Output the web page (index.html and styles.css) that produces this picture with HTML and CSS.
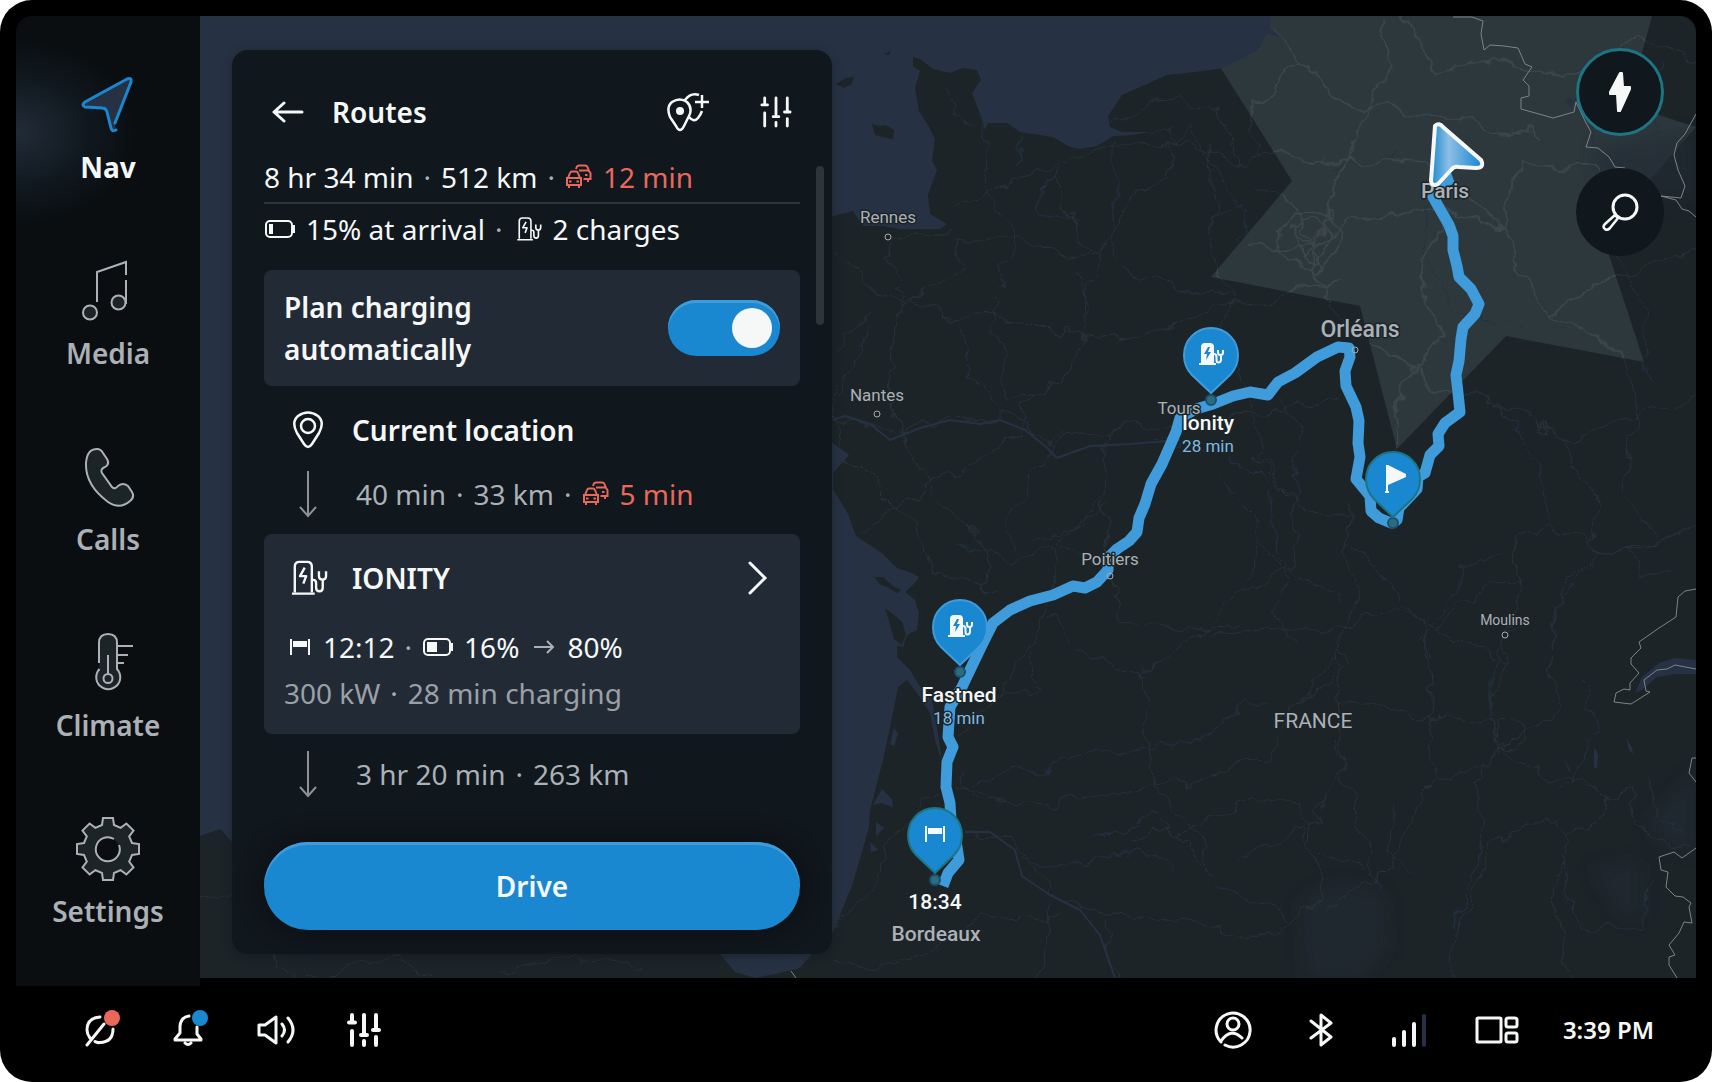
FILE: index.html
```html
<!DOCTYPE html>
<html lang="en">
<head>
<meta charset="utf-8">
<title>Navigation – Routes</title>
<meta name="viewport" content="width=device-width, initial-scale=1">
<link rel="stylesheet" href="styles.css">
</head>
<body>
<svg class="defs" aria-hidden="true">
  <symbol id="traffic" viewBox="0 0 28 26">
    <path d="M2 14h14v7H2zM3 14l2-5q.5-1.500 2-1.500h4q1.500 0 2 1.500l2 5M4 21v3M14 21v3M4 17.500h2.500M11.500 17.500H14M11 5l1-2.500Q12.500 1.500 14 1.500h6q2 0 2.500 1.500L24 7l1.500 2v6h-7M23 15v3M20 11h2.500M14 6.500h9" fill="none" stroke="currentColor" stroke-width="2"/>
  </symbol>
  <symbol id="pump" viewBox="0 0 40 38">
    <path d="M5 34V7q0-5 5-5h8q5 0 5 5v27M2 35.500h24M15.500 8l-5 9h6.500l-3 8M23 21h1.500q3 0 3 3.500V29q0 4 3.500 4t3.500-4v-8M30.500 12v4.500q0 4 3.750 4t3.750-4V12" fill="none" stroke="currentColor" stroke-width="2.500" stroke-linejoin="round"/>
  </symbol>
  <symbol id="pump-solid" viewBox="0 0 28 24">
    <path d="M3 21V5q0-4 4-4h5q4 0 4 4v16h2v2H1v-2z" fill="#f6f8f8"/>
    <path d="M10 5l-4 7h3l-1 6 5-8h-3l2-5z" fill="#1a88d0"/>
    <path d="M16 12q2.500 0 2.500 3v3q0 2.500 2 2.500t2.500-2.500v-5M20 8v2.500q0 2.500 2.500 2.500t2.500-2.500V8" fill="none" stroke="#f6f8f8" stroke-width="2"/>
  </symbol>
  <symbol id="finish" viewBox="0 0 22 18">
    <path d="M1 1h2v16H1zM19 1h2v16h-2zM4 3h14v6H4z" fill="currentColor"/>
  </symbol>
  <symbol id="arrow-down" viewBox="0 0 20 48">
    <path d="M10 1v45M2 37l8 9 8-9" fill="none" stroke="currentColor" stroke-width="2"/>
  </symbol>
  <symbol id="sliders" viewBox="0 0 34 34">
    <path d="M5 2v7M5 18v14M17 2v18M17 28v4M29 2v14M29 24v8M2 9.500h6M14 22h6M26 17h6" fill="none" stroke="currentColor" stroke-linecap="round"/>
  </symbol>
  <symbol id="pin" viewBox="0 0 60 72">
    <path d="M30 69L11 51Q3 43 3 31a27 27 0 0 1 54 0q0 12-8 20z" fill="#1a88d0" stroke="currentColor" stroke-width="2" stroke-linejoin="round"/>
  </symbol>
</svg>

<div class="device">
  <main class="main">
    <nav class="sidebar" aria-label="Main">
      <a class="nav-item is-active" href="#nav">
        <svg class="nav-icon" viewBox="0 0 64 64"><path d="M39 50L55 9q1-5-4-3L9 29q-4 3 0 5l17 1q4 0 5 4l4 16q1 4 5 2" fill="#263243" stroke="#1a88d0" stroke-width="3" stroke-linecap="round"/></svg>
        Nav
      </a>
      <a class="nav-item" href="#media">
        <svg class="nav-icon" viewBox="0 0 64 64" fill="none" stroke="currentColor" stroke-width="2"><path d="M21 43V13L50 3v13M50 21v24"/><circle cx="14" cy="53.500" r="7" fill="#1c2428"/><circle cx="42.500" cy="43.500" r="7" fill="#1c2428"/></svg>
        Media
      </a>
      <a class="nav-item" href="#calls">
        <svg class="nav-icon" viewBox="0 0 64 64"><path d="M21 4q4 0 6 4l4 6q3 5-2 8-5 2-3 6l10 14q3 3 6-1 5-4 10 0l4 6q3 5-2 9-10 9-22 1Q9 40 10 18 11 4 21 4z" fill="#1c2428" stroke="currentColor" stroke-width="2"/></svg>
        Calls
      </a>
      <a class="nav-item" href="#climate">
        <svg class="nav-icon" viewBox="0 0 64 64" fill="none" stroke="currentColor" stroke-width="2"><path d="M23 32V12q0-9 9-9t9 9v26a12 12 0 1 1-17.500 0" fill="#1c2428"/><path d="M32 24v19M42 15h15M42 24h10M42 32h6"/><circle cx="32" cy="47.500" r="4.500"/></svg>
        Climate
      </a>
      <a class="nav-item" href="#settings">
        <svg class="nav-icon" viewBox="-32 -32 64 64" stroke="currentColor" stroke-width="2"><path d="M-6-24L-5-31H5L6-24 12.700-21.200 18.400-25.500 25.500-18.400 21.200-12.700 24-6 31-5V5L24 6 21.200 12.700 25.500 18.400 18.400 25.500 12.700 21.200 6 24 5 31H-5L-6 24-12.700 21.200-18.400 25.500-25.500 18.400-21.200 12.700-24 6-31 5V-5L-24-6-21.200-12.700-25.500-18.400-18.400-25.500-12.700-21.200z" fill="#1c2428"/><path d="M11-4A12 12 0 1 1 6-10" fill="#0a0e11"/></svg>
        Settings
      </a>
    </nav>

    <section class="map" aria-label="Map">
      <svg class="map-canvas" viewBox="200 16 1496 962" preserveAspectRatio="xMinYMin slice">
        <defs>
          <filter id="wiggle" x="-5%" y="-5%" width="110%" height="110%">
            <feTurbulence type="fractalNoise" baseFrequency=".035" numOctaves="3" seed="7"/>
            <feDisplacementMap in="SourceGraphic" scale="26" xChannelSelector="R" yChannelSelector="G"/>
          </filter>
          <filter id="soft" x="-20%" y="-20%" width="140%" height="140%"><feGaussianBlur stdDeviation="8"/></filter>
          <linearGradient id="cursor-fill" x1="0" y1="0" x2="1" y2="0"><stop offset="0" stop-color="#1a88d0"/><stop offset=".35" stop-color="#8fbfe4"/><stop offset=".75" stop-color="#3f9bda"/><stop offset="1" stop-color="#1a88d0"/></linearGradient>
          <clipPath id="range-clip"><path id="range" d="M1190 16L1222 70 1292 181 1211 277 1360 306 1397 449 1506 336 1644 362 1609 255 1651 179 1696 127 1628 105 1652 16z"/></clipPath>
          <g id="roads">
            <path d="M833 248L860 275 903 303 945 314 1000 316 1050 335 1086 341 1140 335 1180 325 1222 307 1290 290 1340 280"/>
            <path d="M903 303L893 350 890 410 900 440 930 485 980 540 990 590M903 303L885 255 888 236 930 236 945 236M903 303L960 270 955 240 1000 240 1050 250 1100 255"/>
            <path d="M833 413L880 432 940 420 1000 418 1060 440 1110 430 1180 425 1260 410 1340 400"/>
            <path d="M1086 341L1085 280 1110 240 1140 190 1170 180 1166 140M1086 341L1060 380 1010 400 1000 340 990 300"/>
            <path d="M960 210L1000 185 1055 165 1075 235 1100 255M1055 165L1100 150 1160 140 1200 150 1240 165"/>
            <path d="M1240 165L1220 107 1150 105 1110 125M1210 145L1212 230 1230 300 1220 340 1250 400 1260 460 1300 510 1350 515"/>
            <path d="M860 530L920 490 990 450 1020 440 1030 390M833 350L870 310M833 390L850 460 890 500 920 530 925 570 1000 590"/>
            <path d="M1110 430L1100 490 1110 560 1120 620 1180 630 1240 625M1110 500L1060 540 1050 600 1010 680 960 740"/>
            <path d="M1250 455L1290 500 1300 560 1230 600 1200 640 1140 670 1150 730 1155 790 1190 820 1210 870"/>
            <path d="M958 780L1000 800 1050 805 1120 790 1200 780 1260 760 1300 700 1330 660 1360 600 1345 540 1349 500"/>
            <path d="M965 832L1010 838 1060 900 1120 915 1200 925 1270 940 1320 900 1310 830 1340 770 1335 650M1050 900L1040 978M1100 915L1120 978"/>
            <path d="M833 965L900 965 980 920 1060 915M833 930L880 870 900 820 940 790"/>
            <path d="M1212 635L1270 630 1330 630 1400 612 1440 626 1480 648 1504 665 1520 590 1515 540 1545 525 1600 552 1660 545 1696 530"/>
            <path d="M1335 705L1400 708 1432 718 1490 725 1500 745 1490 765 1445 778 1425 790 1410 830 1380 880 1320 910"/>
            <path d="M1500 745L1545 778 1600 785 1606 800 1590 830 1568 832 1556 815 1490 845 1482 870 1455 925 1450 978"/>
            <path d="M1425 630L1430 700 1432 760 1445 778M1504 665L1490 700 1500 745 1540 730 1560 700 1550 650 1560 590 1590 560"/>
            <path d="M1568 832L1555 890 1560 940 1570 978M1606 800L1636 790 1630 820 1650 840 1696 850M1300 700L1350 665 1335 640"/>
            <path d="M1240 165L1290 150 1340 165 1380 160 1440 165 1500 230 1550 320 1620 350M1310 245L1350 150 1390 60 1380 16"/>
            <path d="M1300 60L1350 105 1400 110 1480 125 1540 140M1270 20L1300 60 1250 105 1260 160M1310 245L1290 200 1250 190M1310 245L1240 250"/>
            <path d="M1310 245L1340 330 1400 360 1440 390 1500 400 1560 440 1600 500M1310 245L1360 215 1450 210 1500 230 1520 160 1600 170"/>
            <path d="M1400 16L1420 50 1440 70 1500 60 1560 80 1640 40 1696 60M1550 320L1580 290 1640 270 1696 250M1560 440L1620 420 1696 400"/>
            <path d="M1600 500L1590 552M1620 350L1640 420 1620 480 1660 545M1450 210L1420 260 1440 340 1400 390 1390 470"/>
            <path d="M1280 240a30 30 0 1 0 60 0a30 30 0 1 0-60 0M1295 240a16 22 0 1 0 32 0a16 22 0 1 0-32 0M1300 260L1330 230M1290 225L1325 265"/>
            <path d="M200 900L240 890 290 978M240 890L250 860M300 978L400 960 430 978M500 978L540 960 640 965"/>
            <path d="M1500 735a12 12 0 1 0 24 0a12 12 0 1 0-24 0M1135 840L1210 820 1250 800 1290 800 1310 830"/>
          </g>
          <g id="rivers">
            <path d="M985 130L980 180 1010 230 1000 290M1022 135L1020 165M1115 140L1115 260M945 90L950 120 975 128"/>
            <path d="M1150 132L1170 125 1178 145 1190 125 1200 150 1215 165 1225 185 1245 200 1260 215M1212 170L1250 210 1240 240"/>
            <path d="M1065 165L1040 190 1040 210 1075 225M960 320L970 380 1000 410M870 320L850 370 840 400"/>
            <path d="M1075 270L1090 310 1080 335M1120 270L1160 280 1190 290 1230 300M1250 200L1210 225"/>
            <path d="M1060 440L1030 480 1010 520 1015 550M1100 490L1080 530 1030 540M1150 440L1220 450 1250 470 1270 490 1280 560 1340 600"/>
            <path d="M950 540L1000 560 1070 550 1110 565M1045 620L1060 620 1080 650 1120 670 1145 675M1030 650L1040 690 980 700M1090 840L1160 820 1200 860"/>
            <path d="M980 780L1010 775 1075 760 1130 750 1200 740 1250 700 1270 710M1020 860L1060 865 1140 850 1180 870M960 770L980 800"/>
            <path d="M1250 580L1260 520 1220 480M1260 540L1290 580 1270 610 1300 650M1340 540L1380 570 1400 600 1425 625 1430 660"/>
            <path d="M1500 550L1460 570 1445 610 1420 640M1520 575L1460 600 1440 630M1515 630L1490 670 1490 720 1500 745"/>
            <path d="M1334 740L1350 800 1370 860 1380 890M1480 765L1482 850 1465 890 1450 930M1395 810L1385 850 1410 870"/>
            <path d="M1620 550L1640 575 1670 575M1696 530L1640 550 1600 552 1560 600 1550 650M1580 680L1595 710 1590 760 1560 790"/>
            <path d="M1650 780L1655 810 1680 830M1560 850L1580 930 1640 930 1650 880M1240 860L1300 830 1330 860 1370 870M1212 880L1240 900 1290 920"/>
            <path d="M1330 170L1400 155 1420 140M1440 165L1420 250 1450 310 1520 330M1500 400L1540 470 1550 520M1280 400L1300 440 1290 500"/>
            <path d="M1600 170L1610 240 1640 300 1650 380M1660 60L1650 140 1680 170M1600 60L1570 110M1590 160L1600 120 1630 150"/>
          </g>
        </defs>
        <rect class="land" x="200" y="16" width="1496" height="962"/>
        <use href="#range" fill="#2d383d"/>
        <g class="urban" filter="url(#soft)"><path d="M1300 900Q1340 870 1385 895L1388 950 1360 978H1305z"/><path d="M1645 820L1696 770V850L1660 845zM1590 868L1640 862 1640 920 1620 915z"/><path d="M1590 150L1696 130V200H1610z"/></g>
        <g filter="url(#wiggle)">
          <use href="#roads" class="road"/>
          <use href="#rivers" class="river"/>
        </g>
        <g clip-path="url(#range-clip)"><use href="#roads" class="road-lit" filter="url(#wiggle)"/></g>
        <path class="loire" d="M833 420L845 416 870 424 890 440 920 428 950 420 980 424 1000 420 1025 430 1045 446 1057 458 1090 446 1130 444 1180 440"/>
        <path class="loire" d="M965 832L990 832 1015 850 1022 876 1050 895 1080 910 1100 935 1115 978"/>
        <path class="sea" d="M200 16H1271L1270 27 1282 38 1267 34 1258 50 1223 68 1203 71 1167 75 1140 87 1122 95 1108 116 1110 127 1122 132 1150 132 1133 135 1113 136 1097 146 1080 149 1070 147 1053 137 1020 132 1007 123 988 123 985 130 982 120 972 93 981 80 977 70 963 68 950 73 933 69 920 59 913 57 913 66 920 71 915 88 919 111 928 125 935 139 932 161 937 170 928 195 930 214 947 224 940 229 900 229 883 226 863 226 853 211 833 216 600 300 833 443 849 455 833 473 833 489 848 514 856 536 883 554 897 568 912 573 919 577 915 583 905 592 915 600 919 613 917 630 907 635 903 647 897 646 897 657 910 670 920 687 932 700 939 740 942 762 935 740 930 713 917 693 907 680 898 687 893 713 883 760 870 810 869 827 853 883 833 932 812 954 800 968 775 974 755 978 735 972 720 954 232 842 220 829 200 836z"/>
        <path class="land" d="M836 84l10-6 8-1-2 7-8 4zM884 54l7-3-2 4zM872 124l8 2 6-1 8 5-1 9-10-2-8-2zM874 577l9 0 10 9 8 4-4 3-10-6-6-2zM885 608l8 6 9 8 4 12-4 11-8-6-4-14z"/>
        <path class="sea" d="M894 728l4 6-4 12-4-2zM882 789l10 10 1 8-12-4-8 2zM876 822l8 6-8 8zM870 842l8 8-7 2zM1696 660L1675 658 1659 663 1642 677 1635 693 1642 690 1657 677 1675 674 1696 674zM1594 747l4 8-1 14-3-2zM1626 738l6 10 1 6-4-4zM1563 757l8 14-2 0z"/>
        <g class="border">
          <path d="M1453 17H1472L1483 21 1481 34 1484 50 1490 45 1504 46 1518 48 1525 64 1532 67 1523 80 1529 86 1529 96 1521 98 1521 109 1539 114 1553 118 1574 112 1576 102 1586 123 1591 132 1586 147 1598 148 1609 157 1615 167 1625 168"/>
          <path d="M1696 114L1685 134 1677 143 1674 155 1678 170 1685 186 1681 198 1661 196 1676 200 1682 209 1689 211 1696 217"/>
          <path d="M1696 589L1685 591 1678 597 1676 617 1659 628 1639 642 1641 648 1631 658V664L1639 673 1630 683V690L1624 689 1616 693 1614 702 1631 704 1650 692 1646 691 1644 680 1657 670 1667 669 1675 665 1696 669"/>
          <path d="M1696 758H1692L1689 773 1696 782M1696 848L1682 858 1674 852 1659 857 1661 870 1668 872 1666 887 1675 896 1683 897 1691 903 1689 907 1692 923 1684 922 1679 933 1669 945 1675 955 1669 957V965L1677 978M791 971L796 978"/>
        </g>
        <g class="town"><circle cx="888" cy="237" r="3"/><circle cx="877" cy="414" r="3"/><circle cx="1505" cy="635" r="3"/><circle cx="1178" cy="425" r="3"/></g>
        <path class="route" d="M1453 178Q1436 184 1433 197L1449 225 1453 236V250L1457 266 1459 277 1471 289 1479 304 1475 314 1463 327 1461 339 1459 361 1456 375 1458 393 1460 412 1445 423 1438 434 1439 446 1430 455 1425 473 1418 477 1417 489 1399 508 1397 520 1391 523 1379 518 1371 511 1370 496 1356 479 1358 468 1360 457 1358 443 1359 421 1356 407 1346 386 1345 371 1350 357 1349 348 1338 347 1317 357 1295 373 1278 382 1268 395 1250 392 1233 396 1213 404 1196 409 1180 418 1176 432 1162 464 1151 484 1145 504 1139 518 1137 532 1129 541 1117 549 1108 558V570L1097 582 1085 588 1073 586 1053 595 1030 601 1010 610 993 623 983 643 970 670 962 687 950 707 948 737 953 747 947 762 946 787 950 803 951 820 957 847 959 860 948 873 943 886"/>
        <g class="town town-over"><circle cx="1110" cy="576" r="3"/><circle cx="1355" cy="350" r="3"/></g>
        <g class="stop"><circle cx="1211" cy="400" r="5"/><circle cx="1393" cy="523" r="5"/><circle cx="960" cy="672" r="5"/><circle cx="935" cy="880" r="5"/></g>
        <g class="pin-edge-light"><use href="#pin" x="1181" y="324" width="60" height="72"/><use href="#pin" x="930" y="596" width="60" height="72"/></g>
        <g class="pin-edge-teal"><use href="#pin" x="1363" y="448" width="60" height="72"/><use href="#pin" x="905" y="804" width="60" height="72"/></g>
        <use href="#pump-solid" x="1198" y="342" width="28" height="24"/>
        <use href="#pump-solid" x="947" y="614" width="28" height="24"/>
        <path d="M1386 465h2l18 9v3l-18 8v6h1v2h-4v-2h1z" fill="#f6f8f8"/>
        <g class="finish-mark"><use href="#finish" x="924" y="825" width="22" height="18"/></g>
        <g class="label label-city"><text x="1445" y="198">Paris</text><text x="936" y="941">Bordeaux</text></g>
        <g class="label label-metro"><text x="1360" y="337">Orléans</text></g>
        <path d="M1435 126Q1439 122 1443 127L1481 160Q1485 168 1476 168L1459 167Q1454 166 1451 170L1438 184Q1432 187 1431 181z" fill="url(#cursor-fill)" stroke="#f6f8f8" stroke-width="4" stroke-linejoin="round"/>
        <g class="label label-country"><text x="1313" y="728">FRANCE</text></g>
        <g class="label label-town"><text x="888" y="223">Rennes</text><text x="877" y="401">Nantes</text><text x="1110" y="565">Poitiers</text><text x="1179" y="414">Tours</text></g>
        <g class="label label-small"><text x="1505" y="625">Moulins</text></g>
        <g class="label label-stop"><text x="1208" y="430">Ionity</text><text x="959" y="702">Fastned</text><text x="935" y="909">18:34</text></g>
        <g class="label label-time"><text x="1208" y="452">28 min</text><text x="959" y="724">18 min</text></g>
      </svg>

      <section class="panel" aria-label="Routes">
        <header class="panel-head">
          <button class="icon-btn" type="button" aria-label="Back"><svg width="32" height="24" viewBox="0 0 32 24"><path d="M12 3L2 12l10 9M2 12h28" fill="none" stroke="currentColor" stroke-width="3" stroke-linecap="round" stroke-linejoin="round"/></svg></button>
          <h1 class="panel-title">Routes</h1>
          <button class="icon-btn" type="button" aria-label="Add stop"><svg width="44" height="40" viewBox="0 0 44 40" fill="none" stroke="currentColor" stroke-width="2"><path d="M14 38Q12 38 10 34L4 25Q0 15 6 10 14 5 21 10 27 16 23 24L18 34Q16 38 14 38zM19 8Q25 0 33 3M23 25Q28 31 32 26 35 22 36 19M36 3v13M29 10h14" stroke-width="2.500"/><circle cx="14" cy="19" r="4" fill="currentColor" stroke="none"/></svg></button>
          <button class="icon-btn icon-btn-thin" type="button" aria-label="Route options"><svg width="32" height="32" viewBox="0 0 34 34"><use href="#sliders"/></svg></button>
        </header>

        <div class="panel-body">
          <p class="summary summary-first"><span>8 hr 34 min</span><span class="sep">·</span><span>512 km</span><span class="sep">·</span><span class="delay"><svg width="28" height="26"><use href="#traffic"/></svg>12 min</span></p>
          <p class="summary"><svg width="32" height="20" viewBox="0 0 32 20"><rect x="2" y="2" width="26" height="16" rx="4" fill="none" stroke="currentColor" stroke-width="2"/><path d="M5 5h4v10H5zM29 6h2v8h-2z" fill="currentColor"/></svg><span>15% at arrival</span><span class="sep">·</span><svg class="summary-pump" width="26" height="26"><use href="#pump"/></svg><span>2 charges</span></p>

          <div class="card card-toggle">
            <label class="toggle-label" for="auto-charge">Plan charging automatically</label>
            <input class="toggle" id="auto-charge" type="checkbox" role="switch" checked>
          </div>

          <div class="legs">
            <div class="leg leg-place"><svg width="32" height="38" viewBox="0 0 32 38" fill="none" stroke="currentColor" stroke-width="2"><path d="M16 36Q14 36 12 33L5 22Q-1 11 6 5 16-2 26 5 33 11 27 22L20 33Q18 36 16 36z" stroke-width="2.500"/><circle cx="16" cy="15" r="7" stroke-width="2.500"/></svg>Current location</div>
            <div class="leg"><svg class="leg-arrow" width="20" height="48"><use href="#arrow-down"/></svg><p class="leg-text"><span>40 min</span><span class="sep">·</span><span>33 km</span><span class="sep">·</span><span class="delay"><svg width="28" height="26"><use href="#traffic"/></svg>5 min</span></p></div>
          </div>

          <a class="card stop-card" href="#ionity">
            <span class="stop-head"><svg width="38" height="36"><use href="#pump"/></svg><span class="stop-name">IONITY</span><svg width="20" height="34" viewBox="0 0 20 34"><path d="M2 2l15 15L2 32" fill="none" stroke="currentColor" stroke-width="3" stroke-linecap="round"/></svg></span>
            <span class="stop-row"><svg class="stop-flag" width="22" height="18"><use href="#finish"/></svg><span>12:12</span><span class="sep">·</span><svg width="32" height="20" viewBox="0 0 32 20"><rect x="2" y="2" width="26" height="16" rx="4" fill="none" stroke="currentColor" stroke-width="2"/><path d="M5 5h10v10H5zM29 6h2v8h-2z" fill="currentColor"/></svg><span>16%</span><svg class="to" width="22" height="14" viewBox="0 0 22 14"><path d="M1 7h19M14 1l6 6-6 6" fill="none" stroke="currentColor" stroke-width="2"/></svg><span>80%</span></span>
            <span class="stop-meta"><span>300 kW</span><span class="sep">·</span><span>28 min charging</span></span>
          </a>

          <div class="legs">
            <div class="leg leg-last"><svg class="leg-arrow" width="20" height="48"><use href="#arrow-down"/></svg><p class="leg-text"><span>3 hr 20 min</span><span class="sep">·</span><span>263 km</span></p></div>
          </div>
        </div>
        <button class="drive" type="button">Drive</button>
        <span class="scroll-thumb"></span>
      </section>

      <div class="map-tools">
        <button class="round-btn is-on" type="button" aria-label="Charging stations"><svg width="24" height="42" viewBox="0 0 24 42"><path d="M14 2h-2L2 21v2h7l1 17h2l10-22v-2h-7z" fill="currentColor" stroke="currentColor" stroke-width="2" stroke-linejoin="round"/></svg></button>
        <button class="round-btn" type="button" aria-label="Search"><svg width="38" height="38" viewBox="0 0 38 38" fill="none" stroke="currentColor" stroke-width="3"><circle cx="24" cy="14" r="12"/><path d="M14 22L4 31q-3 3 0 5 2 2 5-1l8-10z" stroke-width="2.500"/></svg></button>
      </div>
    </section>
  </main>

  <footer class="status">
    <div class="status-group">
      <button class="status-btn" type="button" aria-label="Data sharing"><svg width="36" height="36" viewBox="0 0 36 36"><path d="M18 5Q5 6 5 18q0 4 3 8M5 33L22 12M31 17q0 13-13 13.500-3 .5-5-1" /></svg><span class="dot dot-red"></span></button>
      <button class="status-btn" type="button" aria-label="Notifications"><svg width="36" height="36" viewBox="0 0 36 36"><path d="M19 4q-8 1-9 10v7l-5 6v1h26v-1l-4-5v-7M15 31q3 3 6 0"/></svg><span class="dot dot-blue"></span></button>
      <button class="status-btn" type="button" aria-label="Volume"><svg width="40" height="36" viewBox="0 0 40 36"><path d="M3 13h6l11-8v26L9 23H3zM26 12q5 6 0 12M32 6q10 12 0 24"/></svg></button>
      <button class="status-btn status-btn-bold" type="button" aria-label="Quick settings"><svg width="34" height="34"><use href="#sliders"/></svg></button>
    </div>
    <div class="status-group">
      <button class="status-btn" type="button" aria-label="Profile"><svg width="40" height="40" viewBox="0 0 40 40"><path d="M12 35a17 17 0 1 0-4-3M8 31q10-14 21-3"/><circle cx="20" cy="14" r="6"/></svg></button>
      <button class="status-btn" type="button" aria-label="Bluetooth"><svg width="24" height="36" viewBox="0 0 24 36"><path d="M2 9l20 16-10 8V3l10 8L2 26"/></svg></button>
      <button class="status-btn" type="button" aria-label="Signal"><svg width="36" height="36" viewBox="0 0 36 36"><g class="bars"><path d="M3 27v6M13 20v13M23 12v21"/><path d="M33 4v29" stroke="#263243"/></g></svg></button>
      <button class="status-btn" type="button" aria-label="Layout"><svg width="44" height="28" viewBox="0 0 44 28"><rect x="2" y="2" width="24" height="24" rx="1"/><rect x="31" y="2" width="11" height="9" rx="2"/><rect x="31" y="17" width="11" height="9" rx="2"/></svg></button>
      <time class="clock">3:39 PM</time>
    </div>
  </footer>
</div>
</body>
</html>
```
FILE: styles.css
```css
* {
  box-sizing: border-box;
}

body {
  margin: 0;
  background: #fff;
  color: #f6f8f8;
  font: 400 28px/42px "Noto Sans", "Open Sans", sans-serif;
}

h1,
p {
  margin: 0;
  font-size: inherit;
}

a {
  color: inherit;
  text-decoration: none;
}

button {
  padding: 0;
  border: 0;
  background: none;
  color: inherit;
  font: inherit;
  cursor: pointer;
}

svg {
  flex: none;
}

.defs {
  position: absolute;
  width: 0;
  height: 0;
}

.device {
  display: flex;
  flex-direction: column;
  min-height: 100vh;
  border-radius: 32px;
  background: #000;
  overflow: hidden;
}

.main {
  flex: 1;
  display: grid;
  grid-template-columns: 184px 1fr;
  padding: 16px 16px 0;
}

/* Sidebar */

.sidebar {
  display: flex;
  flex-direction: column;
  justify-content: space-between;
  padding: 57px 0;
  border-top-left-radius: 16px;
  background: radial-gradient(ellipse 120px 92px at 0 116px, #222c38 0, #10181f 60%, #0a0e11 100%);
}

.nav-item {
  display: flex;
  flex-direction: column;
  align-items: center;
  gap: 12px;
  color: #abb1b6;
  font-weight: 600;
  line-height: 36px;
}

.nav-item.is-active {
  color: #f6f8f8;
  font-weight: 700;
}

.nav-icon {
  width: 64px;
  height: 64px;
}

/* Map */

.map {
  position: relative;
  display: flex;
  justify-content: space-between;
  margin-bottom: 8px;
  padding: 32px;
  border-top-right-radius: 16px;
  overflow: hidden;
}

.map-canvas {
  position: absolute;
  inset: 0;
  width: 100%;
  height: 100%;
}

.land { fill: #1c2428; }
.sea { fill: #263243; }
.urban { fill: #202a36; opacity: .6; }

.road, .river, .road-lit, .border, .loire, .route {
  fill: none;
  stroke-linejoin: round;
}

.road { stroke: #293238; }
.river { stroke: #243042; }
.road-lit { stroke: #3b454c; stroke-width: 2px; }
.border { stroke: #7d8488; stroke-width: 1px; }
.loire { stroke: #263243; stroke-width: 2px; }

.route {
  stroke: #3f9bda;
  stroke-width: 11px;
}

.town {
  fill: #1c2428;
  stroke: #a6abaf;
}

.town-over { fill: none; }

.stop {
  fill: #2a6d80;
  stroke: #1d4f70;
  stroke-width: 2px;
}

.pin-edge-light { color: #3f9bda; }
.pin-edge-teal { color: #1d7583; }
.finish-mark { color: #f6f8f8; }

.label {
  fill: #abb1b6;
  stroke: #1c2428;
  stroke-width: 3px;
  stroke-linejoin: round;
  paint-order: stroke;
  text-anchor: middle;
  font-family: Roboto, "Noto Sans", sans-serif;
}

.label-city { font-size: 21px; font-weight: 500; }
.label-metro { font-size: 23px; font-weight: 500; }
.label-country { font-size: 21px; }
.label-town { font-size: 17px; }
.label-small { font-size: 14px; }
.label-stop { font-size: 21px; font-weight: 500; fill: #f6f8f8; }
.label-time { font-size: 17px; fill: #7fbbe3; }

.map-tools {
  position: relative;
  display: flex;
  flex-direction: column;
  gap: 32px;
}

.round-btn {
  display: grid;
  place-items: center;
  width: 88px;
  height: 88px;
  border-radius: 50%;
  background: #10171d;
}

.round-btn.is-on {
  border: 3px solid #1d7583;
}

/* Routes panel */

.panel {
  position: relative;
  display: flex;
  flex-direction: column;
  width: 600px;
  margin: 2px 0 -8px;
  padding: 32px 32px 24px;
  border-radius: 16px;
  background: #10171d;
  box-shadow: 0 2px 8px rgba(16, 23, 29, .5);
}

.panel-head {
  display: flex;
  align-items: center;
  height: 60px;
  padding: 0 8px;
}

.icon-btn {
  display: flex;
  align-items: center;
}

.panel-title {
  margin: 0 auto 0 28px;
  font-weight: 600;
}

.icon-btn-thin {
  margin-left: 50px;
  stroke-width: 3px;
}

.panel-body {
  flex: 1;
  padding-top: 10px;
}

.sep {
  color: #abb1b6;
}

.summary {
  display: flex;
  align-items: center;
  gap: 10px;
  height: 50px;
}

.summary-first {
  height: 52px;
  border-bottom: 2px solid #2b353b;
}

.summary-pump {
  margin-left: 4px;
}

.delay {
  display: flex;
  align-items: center;
  gap: 10px;
  color: #e8695c;
}

.card {
  border-radius: 8px;
  background: #222b35;
}

.card-toggle {
  display: flex;
  align-items: center;
  justify-content: space-between;
  margin-top: 16px;
  padding: 16px 20px;
}

.toggle-label {
  width: 240px;
  font-weight: 600;
}

.toggle {
  appearance: none;
  display: flex;
  align-items: center;
  width: 112px;
  height: 56px;
  margin: 0;
  padding: 0 8px;
  border-radius: 28px;
  background: #3a4552;
}

.toggle::before {
  content: "";
  width: 40px;
  height: 40px;
  border-radius: 50%;
  background: #f6f8f8;
}

.toggle:checked {
  justify-content: flex-end;
  background: #1a88d0;
  box-shadow: inset 0 3px 0 #3f9bda;
}

.legs {
  padding: 12px 0 8px;
}

.leg {
  display: grid;
  grid-template-columns: 88px 1fr;
  align-items: center;
  height: 64px;
  color: #abb1b6;
}

.leg > svg {
  justify-self: center;
}

.leg-arrow {
  color: #8d9398;
}

.leg-place {
  color: #f6f8f8;
  font-weight: 600;
}

.leg-last {
  margin-top: -4px;
}

.leg-text {
  display: flex;
  gap: 10px;
  padding-left: 4px;
}

.stop-card {
  display: flex;
  flex-direction: column;
  padding: 20px 20px 18px;
}

.stop-head {
  display: flex;
  align-items: center;
  height: 48px;
  margin-bottom: 22px;
  padding: 0 12px 0 6px;
}

.stop-name {
  flex: 1;
  margin-left: 24px;
  font-weight: 600;
}

.stop-row {
  display: flex;
  align-items: center;
  gap: 10px;
  height: 46px;
  padding-left: 5px;
}

.stop-flag {
  margin-right: 2px;
}

.to {
  margin: 0 2px 0 4px;
  color: #abb1b6;
}

.stop-meta {
  display: flex;
  gap: 10px;
  color: #9aa0a6;
  line-height: 46px;
}

.drive {
  height: 88px;
  border-radius: 44px;
  background: #1a88d0;
  box-shadow: inset 0 3px 0 #3f9bda, 0 0 24px #0a0e11;
  font-weight: 600;
}

.scroll-thumb {
  position: absolute;
  top: 116px;
  right: 8px;
  width: 8px;
  height: 159px;
  border-radius: 4px;
  background: #2b353b;
}

/* Status bar */

.status {
  display: flex;
  align-items: center;
  justify-content: space-between;
  height: 96px;
  padding: 0 58px 8px 56px;
}

.status-group {
  display: flex;
  align-items: center;
}

.status-btn {
  position: relative;
  display: grid;
  place-items: center;
  width: 88px;
  height: 64px;
}

.status-btn svg {
  fill: none;
  stroke: currentColor;
  stroke-width: 3px;
  stroke-linecap: round;
  stroke-linejoin: round;
}

.status-btn-bold svg,
.bars {
  stroke-width: 4px;
}

.dot {
  position: absolute;
  top: 12px;
  right: 24px;
  width: 16px;
  height: 16px;
  border-radius: 50%;
}

.dot-red { background: #e8695c; }
.dot-blue { background: #1a88d0; }

.clock {
  margin-left: 22px;
  font-size: 24px;
  font-weight: 600;
}
```
